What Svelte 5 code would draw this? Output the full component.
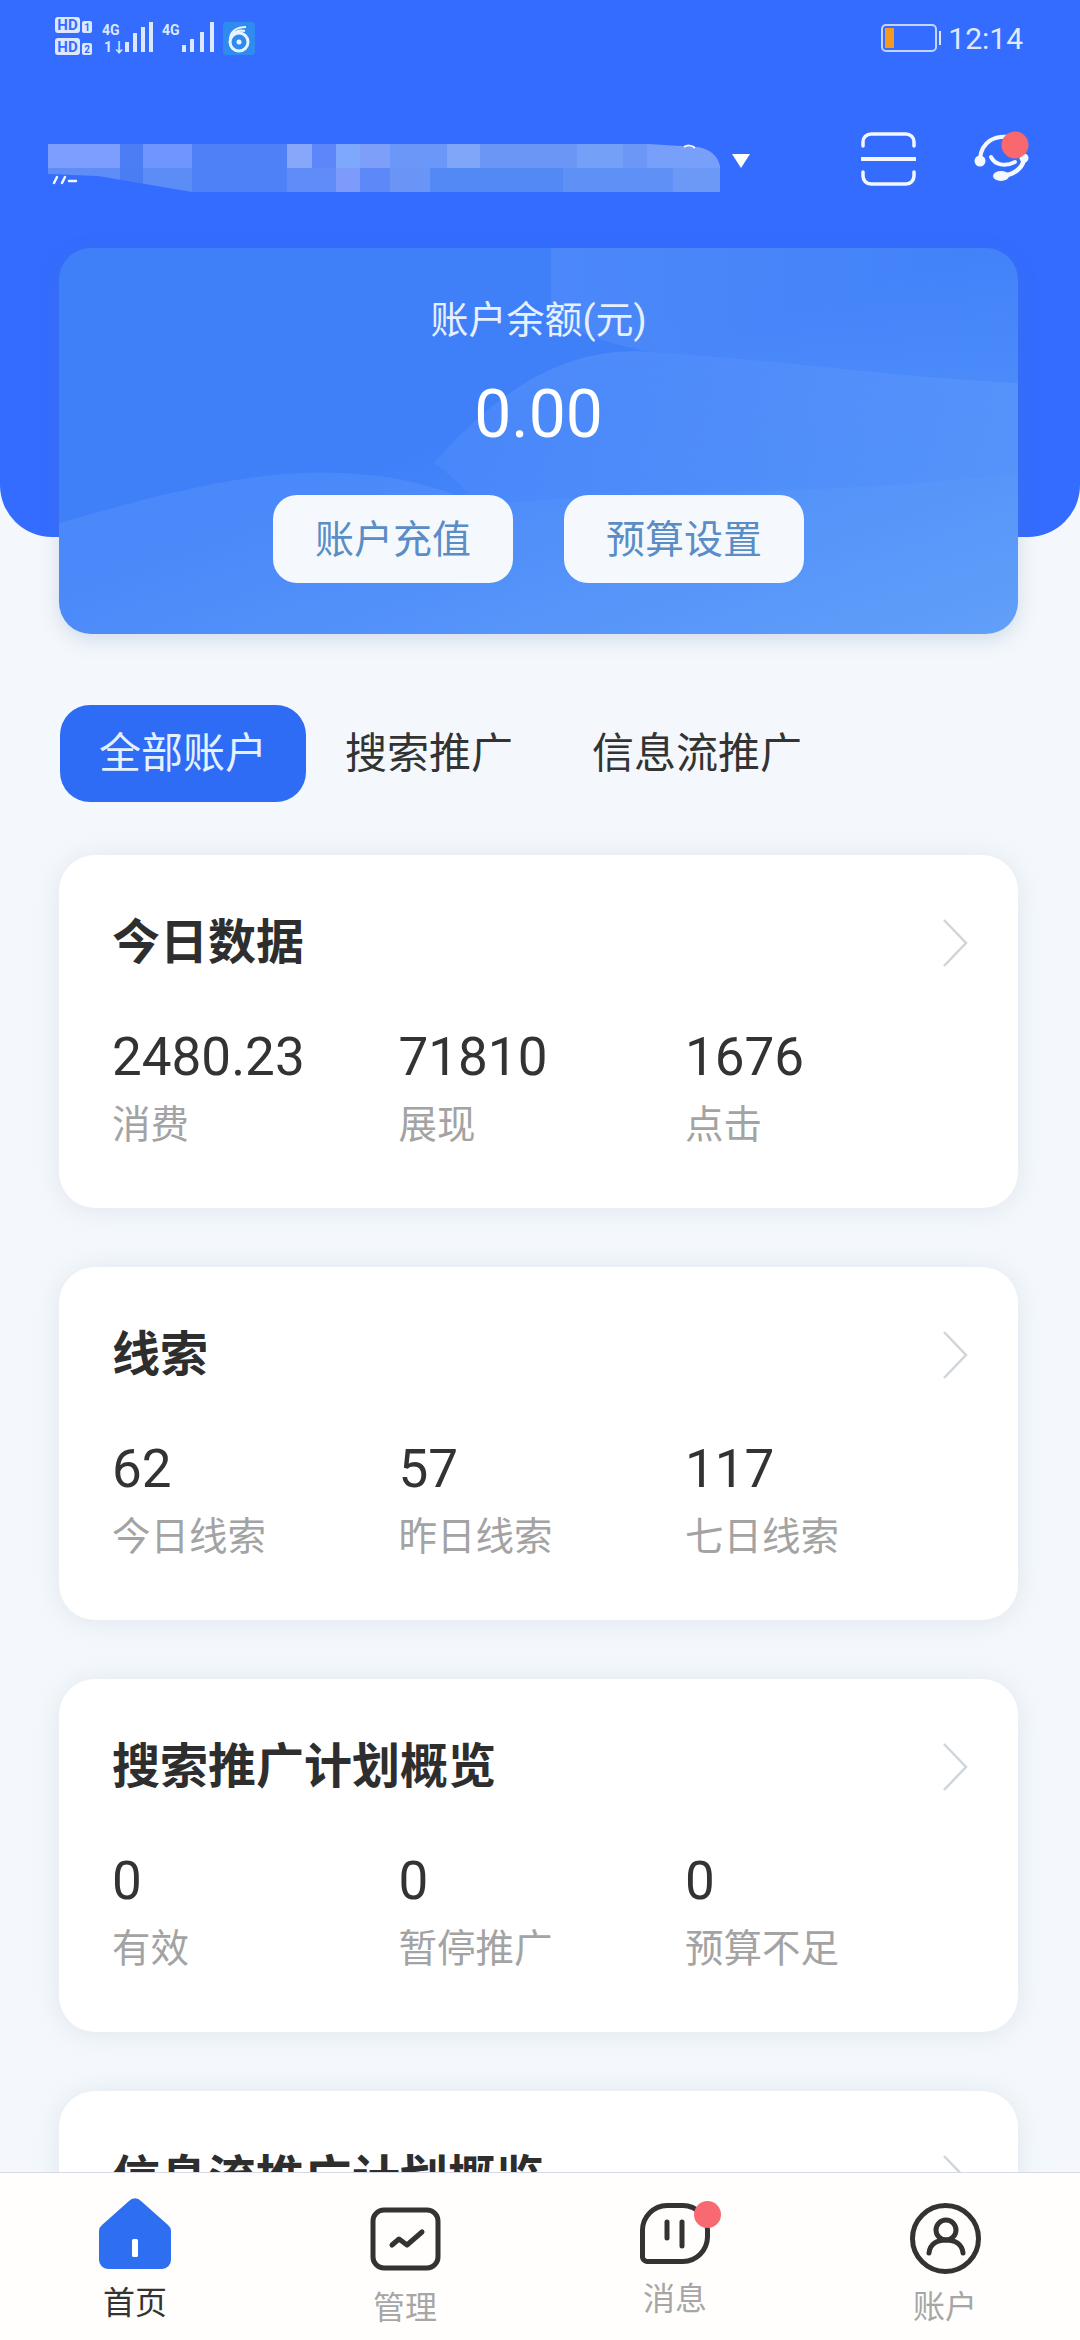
<script>
	const mosaic = [
		// bottom row first, the top row sits above it
		{ x: 0, y: 24, w: 72, h: 24, c: '#5f8df8' },
		{ x: 72, y: 24, w: 23, h: 24, c: '#4a7cf4' },
		{ x: 95, y: 24, w: 49, h: 24, c: '#5c8cf6' },
		{ x: 144, y: 24, w: 95, h: 24, c: '#4f81f6' },
		{ x: 239, y: 24, w: 49, h: 24, c: '#5f8cf8' },
		{ x: 288, y: 24, w: 24, h: 24, c: '#7c9bfb' },
		{ x: 312, y: 24, w: 30, h: 24, c: '#5c88f8' },
		{ x: 342, y: 24, w: 40, h: 24, c: '#6a94f6' },
		{ x: 382, y: 24, w: 133, h: 24, c: '#5289f4' },
		{ x: 515, y: 24, w: 110, h: 24, c: '#5e90f6' },
		{ x: 625, y: 24, w: 47, h: 24, c: '#6c98f6' },
		{ x: 0, y: 0, w: 72, h: 24, c: '#7d9dff' },
		{ x: 72, y: 0, w: 23, h: 24, c: '#4c7df5' },
		{ x: 95, y: 0, w: 49, h: 24, c: '#7095fc' },
		{ x: 144, y: 0, w: 95, h: 24, c: '#4f80f8' },
		{ x: 239, y: 0, w: 25, h: 24, c: '#87a8fa' },
		{ x: 264, y: 0, w: 24, h: 24, c: '#5d86fa' },
		{ x: 288, y: 0, w: 24, h: 24, c: '#7ea8fc' },
		{ x: 312, y: 0, w: 30, h: 24, c: '#7d9ffa' },
		{ x: 342, y: 0, w: 57, h: 24, c: '#6b97f8' },
		{ x: 399, y: 0, w: 33, h: 24, c: '#80a6fa' },
		{ x: 432, y: 0, w: 97, h: 24, c: '#6b96f6' },
		{ x: 529, y: 0, w: 46, h: 24, c: '#74a0f8' },
		{ x: 575, y: 0, w: 24, h: 24, c: '#6c97f6' },
		{ x: 599, y: 0, w: 73, h: 24, c: '#78a0fa' }
	];

	const cards = [
		{
			title: '今日数据',
			stats: [
				{ value: '2480.23', label: '消费' },
				{ value: '71810', label: '展现' },
				{ value: '1676', label: '点击' }
			]
		},
		{
			title: '线索',
			stats: [
				{ value: '62', label: '今日线索' },
				{ value: '57', label: '昨日线索' },
				{ value: '117', label: '七日线索' }
			]
		},
		{
			title: '搜索推广计划概览',
			stats: [
				{ value: '0', label: '有效' },
				{ value: '0', label: '暂停推广' },
				{ value: '0', label: '预算不足' }
			]
		},
		// runs under the tab bar, only the title shows
		{ title: '信息流推广计划概览', stats: [] }
	];
</script>

<div class="page">
	<header class="header">
		<div class="status">
			<svg class="status-icons" width="205" height="46" viewBox="0 0 205 46">
				<g class="status-glyphs">
					<rect x="0" y="6" width="25" height="16" rx="3" />
					<rect x="0" y="27" width="25" height="17" rx="3" />
					<rect x="27" y="10" width="10" height="12" rx="2" />
					<rect x="27" y="32" width="10" height="12" rx="2" />
					<rect x="70" y="31" width="4" height="10" />
					<rect x="78" y="22" width="4" height="19" />
					<rect x="86" y="16" width="4" height="25" />
					<rect x="94" y="11" width="4" height="30" />
					<rect x="127" y="34" width="4" height="7" />
					<rect x="135" y="28" width="4" height="13" />
					<rect x="145" y="21" width="4" height="20" />
					<rect x="155" y="11" width="4" height="30" />
				</g>
				<text class="hd" x="12.5" y="19">HD</text>
				<text class="hd" x="12.5" y="41">HD</text>
				<text class="hd small" x="32" y="20">1</text>
				<text class="hd small" x="32" y="42">2</text>
				<text class="g4" x="47" y="24">4G</text>
				<text class="g4" x="107" y="24">4G</text>
				<text class="g4" x="49" y="41">1↓</text>
				<rect x="168" y="11" width="32" height="33" rx="3" fill="#2f8bef" />
				<circle cx="184" cy="31" r="9" fill="none" stroke="#e8f4ff" stroke-width="3" />
				<circle cx="184" cy="31" r="2.5" fill="#e8f4ff" />
				<path d="M175 27c1-7 7-11 16-11M178 23c3-3 7-4 12-3" fill="none" stroke="#e8f4ff" stroke-width="2" />
			</svg>
			<div class="status-right">
				<div class="battery">
					<span class="battery-fill"></span>
				</div>
				<span class="battery-cap"></span>
				<span class="time">12:14</span>
			</div>
		</div>

		<div class="account-row">
			<svg class="mosaic" width="672" height="48" viewBox="0 0 672 48">
				{#each mosaic as m}
					<rect x={m.x} y={m.y} width={m.w} height={m.h} fill={m.c} />
				{/each}
				<path d="M0 30L50 32L144 48H0Z" fill="#336cff" />
				<path d="M600 0H672V22C670 12 662 5 650 3Z" fill="#336cff" />
				<path d="M636 3c3-2 8-2 11 1" fill="none" stroke="#f2f6ff" stroke-width="2" />
				<path d="M6 39l3-6M14 39l3-6M21 37h7" stroke="#f2f6ff" stroke-width="2.5" stroke-linecap="round" />
			</svg>
			<svg class="caret" width="20" height="15" viewBox="0 0 20 15">
				<path d="M1 1H19L10 15Z" fill="#fff" />
			</svg>
			<svg class="scan" width="55" height="54" viewBox="0 0 55 54">
				<path d="M2 14V10a8 8 0 0 1 8-8H45a8 8 0 0 1 8 8V14M2 40V44a8 8 0 0 0 8 8H45a8 8 0 0 0 8-8V40" fill="none" stroke="#f2f7ff" stroke-width="3.5" stroke-linecap="round" />
				<path d="M1 27H54" stroke="#f2f7ff" stroke-width="4" stroke-linecap="round" />
			</svg>
			<svg class="service" width="58" height="54" viewBox="0 0 58 54">
				<path d="M6 28C8 12 20 5 36 7" fill="none" stroke="#f4f8ff" stroke-width="4" />
				<circle cx="6" cy="31" r="5.5" fill="#f4f8ff" />
				<path d="M17 27c4 8 14 10 24 5" fill="none" stroke="#f4f8ff" stroke-width="4" stroke-linecap="round" />
				<path d="M50 29c-1 8-9 15-18 16" fill="none" stroke="#f4f8ff" stroke-width="4.5" stroke-linecap="round" />
				<ellipse cx="27" cy="46" rx="8" ry="5" fill="#f4f8ff" />
				<circle cx="50" cy="28" r="4.5" fill="#f4f8ff" />
				<circle cx="41" cy="15" r="13.5" fill="#f8686c" />
			</svg>
		</div>

		<section class="balance">
			<svg class="waves" viewBox="0 0 959 386" preserveAspectRatio="none">
				<defs>
					<linearGradient id="topfade" x1="0" y1="0" x2="1" y2="0">
						<stop offset="0" stop-color="#9cc2ff" stop-opacity="0.13" />
						<stop offset="0.6" stop-color="#9cc2ff" stop-opacity="0.07" />
						<stop offset="1" stop-color="#9cc2ff" stop-opacity="0.02" />
					</linearGradient>
					<linearGradient id="midfade" x1="0" y1="0" x2="0" y2="1">
						<stop offset="0" stop-color="#8fbcff" stop-opacity="0.2" />
						<stop offset="1" stop-color="#8fbcff" stop-opacity="0.06" />
					</linearGradient>
				</defs>
				<path d="M492 0H959V135C840 130 720 112 602 105C560 100 520 85 492 70Z" fill="url(#topfade)" />
				<path d="M375 215C450 130 520 95 602 105C720 112 840 130 959 135V225C760 250 560 240 420 258C405 240 390 225 375 215Z" fill="url(#midfade)" />
				<path d="M0 275C90 250 190 220 285 225C340 228 380 238 420 258C560 240 760 250 959 225V386H0Z" fill="#8cc0ff" opacity="0.14" />
			</svg>
			<div class="balance-label">账户余额(元)</div>
			<div class="balance-value">0.00</div>
			<div class="balance-actions">
				<span class="action">账户充值</span>
				<span class="action">预算设置</span>
			</div>
		</section>
	</header>

	<nav class="tabs">
		<span class="tab active">全部账户</span>
		<span class="tab">搜索推广</span>
		<span class="tab">信息流推广</span>
	</nav>

	<main class="cards">
		{#each cards as card}
			<section class="card">
				<div class="card-head">
					<h2>{card.title}</h2>
					<svg width="26" height="48" viewBox="0 0 26 48">
						<path d="M2 1L24 24L2 47" fill="none" stroke="#cfd5da" stroke-width="2.5" />
					</svg>
				</div>
				<div class="stats">
					{#each card.stats as stat}
						<div>
							<div class="stat-value">{stat.value}</div>
							<div class="stat-label">{stat.label}</div>
						</div>
					{/each}
				</div>
			</section>
		{/each}
	</main>

	<footer class="bottom-nav">
		<div class="nav-item home">
			<svg width="72" height="72" viewBox="0 0 72 72">
				<path d="M30 3a8 8 0 0 1 12 0L69 27a8 8 0 0 1 3 6V62a9 9 0 0 1-9 9H9a9 9 0 0 1-9-9V33a8 8 0 0 1 3-6Z" fill="#2e6ef0" />
				<rect x="33" y="41" width="6" height="18" rx="1.5" fill="#fff" />
			</svg>
			<span class="nav-label current">首页</span>
		</div>
		<div class="nav-item manage">
			<svg width="71" height="64" viewBox="0 0 71 64">
				<rect x="3" y="3" width="65" height="58" rx="11" fill="none" stroke="#333" stroke-width="5" />
				<path d="M22 38L29 32L37 38L52 25" fill="none" stroke="#333" stroke-width="5" stroke-linecap="round" stroke-linejoin="round" />
			</svg>
			<span class="nav-label">管理</span>
		</div>
		<div class="nav-item message">
			<svg width="70" height="61" viewBox="0 0 70 61">
				<path d="M27 2.5H43A25 25 0 0 1 67.5 27V34A25 25 0 0 1 43 58.5H8A5 5 0 0 1 2.5 53V27A25 25 0 0 1 27 2.5Z" fill="none" stroke="#333" stroke-width="5" />
				<path d="M27 19V35M42 19V43" stroke="#333" stroke-width="5" stroke-linecap="round" />
			</svg>
			<span class="dot"></span>
			<span class="nav-label">消息</span>
		</div>
		<div class="nav-item mine">
			<svg width="71" height="71" viewBox="0 0 71 71">
				<circle cx="35.5" cy="35.5" r="33" fill="none" stroke="#333" stroke-width="5" />
				<circle cx="36" cy="27" r="10" fill="none" stroke="#333" stroke-width="5" />
				<path d="M19 50C20 41 27 37 36 37C45 37 52 41 53 50" fill="none" stroke="#333" stroke-width="5" stroke-linecap="round" />
			</svg>
			<span class="nav-label">账户</span>
		</div>
	</footer>
</div>

<style>
	:global(body) {
		margin: 0;
	}

	.page {
		position: relative;
		width: 1080px;
		height: 2340px;
		overflow: hidden;
		background: #f4f8fc;
		font-family: Roboto, 'Noto Sans CJK SC', sans-serif;
		color: #333;
	}

	.header {
		height: 537px;
		background: #336cff;
		border-radius: 0 0 52px 52px;
		margin-bottom: 168px;
		display: flex;
		flex-direction: column;
	}

	.status {
		height: 76px;
		display: flex;
		justify-content: space-between;
		padding: 0 57px 0 55px;
		box-sizing: border-box;
	}

	.status-icons {
		margin-top: 11px;
	}

	.status-glyphs {
		fill: #dce8ff;
	}

	.hd {
		font-size: 15px;
		font-weight: 700;
		fill: #336cff;
		text-anchor: middle;
	}

	.hd.small {
		font-size: 10px;
	}

	.g4 {
		font-size: 14px;
		font-weight: 700;
		fill: #dce8ff;
	}

	.status-right {
		display: flex;
		align-items: center;
		height: 76px;
	}

	.battery {
		width: 56px;
		height: 28px;
		box-sizing: border-box;
		border: 2px solid #c3d4f4;
		border-radius: 5px;
		padding: 2px;
	}

	.battery-fill {
		display: block;
		width: 9px;
		height: 100%;
		background: #f59a1e;
	}

	.battery-cap {
		width: 2px;
		height: 14px;
		background: #dce8ff;
		margin-left: 2px;
	}

	.time {
		font-size: 30px;
		color: #e0eaff;
		margin-left: 7px;
	}

	.account-row {
		height: 62px;
		margin-top: 54px;
		padding-left: 48px;
		display: flex;
		align-items: flex-start;
	}

	.mosaic {
		margin-top: 14px;
	}

	.caret {
		margin: 23px 0 0 11px;
	}

	.scan {
		margin: 2px 0 0 110px;
	}

	.service {
		margin: 0 0 0 58px;
	}

	.balance {
		position: relative;
		margin: 56px 62px 0 59px;
		height: 386px;
		flex: none;
		overflow: hidden;
		border-radius: 32px;
		background: linear-gradient(160deg, #3f7ff8 0%, #3f80f9 45%, #5a9af9 100%);
		box-shadow: 0 6px 20px rgba(90, 120, 170, 0.22);
		text-align: center;
		color: #fff;
	}

	.waves {
		position: absolute;
		inset: 0;
		width: 100%;
		height: 100%;
	}

	.balance-label,
	.balance-value,
	.balance-actions {
		position: relative;
	}

	.balance-label {
		margin-top: 47px;
		font-size: 38px;
		line-height: 50px;
		color: #e6f0ff;
	}

	.balance-value {
		margin-top: 30px;
		font-size: 66px;
		line-height: 80px;
	}

	.balance-actions {
		margin-top: 40px;
		display: flex;
		justify-content: center;
		gap: 51px;
	}

	.action {
		width: 240px;
		height: 88px;
		border-radius: 24px;
		background: #f5f9fe;
		color: #5a8dc6;
		font-size: 39px;
		line-height: 90px;
	}

	.tabs {
		display: flex;
		height: 97px;
		margin-left: 60px;
	}

	.tab {
		padding: 0 40px 0 39px;
		font-size: 42px;
		line-height: 97px;
		border-radius: 30px;
		color: #333;
	}

	.tab.active {
		padding: 0 39px;
		background: #2f6cf5;
		color: #e4f1ff;
	}

	.cards {
		margin: 53px 62px 0 59px;
		display: flex;
		flex-direction: column;
		gap: 59px;
	}

	.card {
		height: 353px;
		flex: none;
		box-sizing: border-box;
		padding: 58px 50px 0 53px;
		border-radius: 36px;
		background: #fff;
		box-shadow: 0 2px 26px rgba(140, 160, 180, 0.2);
	}

	.card-head {
		display: flex;
		justify-content: space-between;
		align-items: center;
		height: 60px;
	}

	h2 {
		margin: 0;
		font-size: 48px;
		line-height: 62px;
		font-weight: 700;
		color: #2e2e2e;
	}

	.stats {
		margin-top: 54px;
		display: grid;
		grid-template-columns: repeat(3, 286.5px);
	}

	.stat-value {
		font-size: 53px;
		line-height: 60px;
		color: #333;
	}

	.stat-label {
		margin-top: 13px;
		font-size: 38.5px;
		line-height: 50px;
		color: #a3a3a3;
	}

	.bottom-nav {
		position: absolute;
		left: 0;
		right: 0;
		bottom: 0;
		height: 168px;
		box-sizing: border-box;
		border-top: 1px solid #d6d9e4;
		background: #fffefc;
		display: grid;
		grid-template-columns: repeat(4, 270px);
	}

	.nav-item {
		position: relative;
		display: flex;
		flex-direction: column;
		align-items: center;
	}

	.nav-label {
		font-size: 32px;
		line-height: 40px;
		color: #a6a6a6;
	}

	.nav-label.current {
		color: #333;
	}

	.home {
		padding-top: 25px;
	}

	.home .nav-label {
		margin-top: 13px;
	}

	.manage {
		padding-top: 34px;
	}

	.manage .nav-label {
		margin-top: 17px;
	}

	.message {
		padding-top: 30px;
	}

	.message .nav-label {
		margin-top: 15px;
	}

	.mine {
		padding-top: 30px;
	}

	.mine .nav-label {
		margin-top: 13px;
	}

	.dot {
		position: absolute;
		top: 28px;
		left: 154px;
		width: 27px;
		height: 27px;
		border-radius: 50%;
		background: #f96a70;
	}
</style>
